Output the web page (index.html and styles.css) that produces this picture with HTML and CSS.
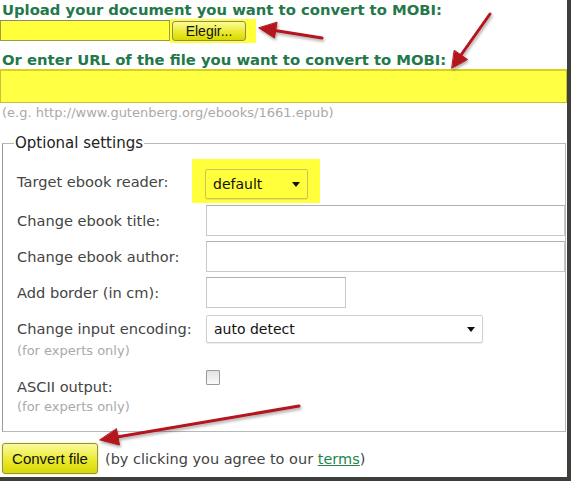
FILE: index.html
```html
<!DOCTYPE html>
<html lang="en">
<head>
    <meta charset="UTF-8">
    <title>Convert to MOBI</title>
    <link rel="stylesheet" href="styles.css">
</head>
<body>
    <div class="frame">
        <h2 class="title">Upload your document you want to convert to MOBI:</h2>
        <div class="file-row">
            <input type="text" class="file-text">
            <div class="hl-btn"><button class="btn btn-small">Elegir...</button></div>
        </div>

        <h2 class="title title-2">Or enter URL of the file you want to convert to MOBI:</h2>
        <input type="text" class="url">
        <p class="hint">(e.g. http://www.gutenberg.org/ebooks/1661.epub)</p>

        <fieldset class="options">
            <legend>Optional settings</legend>

            <div class="row row-target">
                <label>Target ebook reader:</label>
                <div class="hl-select">
                    <div class="select select-small">default <span class="caret"></span></div>
                </div>
            </div>

            <div class="row row-title">
                <label>Change ebook title:</label>
                <input type="text" class="field field-wide">
            </div>

            <div class="row">
                <label>Change ebook author:</label>
                <input type="text" class="field field-wide">
            </div>

            <div class="row">
                <label>Add border (in cm):</label>
                <input type="text" class="field field-short">
            </div>

            <div class="row row-top row-enc">
                <div>
                    <label class="enc-label">Change input encoding:</label>
                    <div class="note">(for experts only)</div>
                </div>
                <div class="select select-wide">auto detect <span class="caret"></span></div>
            </div>

            <div class="row row-top">
                <div class="ascii-label">
                    <label>ASCII output:</label>
                    <div class="note note-ascii">(for experts only)</div>
                </div>
                <input type="checkbox" class="check">
            </div>
        </fieldset>

        <div class="submit-row">
            <button class="btn btn-big">Convert file</button>
            <span class="agree">(by clicking you agree to our <a href="#">terms</a>)</span>
        </div>

        <!-- red annotation arrows -->
        <svg class="arrows" width="567" height="477" viewBox="0 0 567 477">
            <defs>
                <filter id="shadow" x="-20%" y="-20%" width="140%" height="140%">
                    <feDropShadow dx="1" dy="2" stdDeviation="1.5" flood-color="#000" flood-opacity="0.35"/>
                </filter>
            </defs>
            <g filter="url(#shadow)" fill="#b3141b" stroke="#b3141b" stroke-linecap="round">
                <line x1="275" y1="30.5" x2="322" y2="38" stroke-width="3"/>
                <polygon points="259,28 274.5,38 277,22.5" stroke-width="1"/>

                <line x1="461" y1="55" x2="490" y2="14" stroke-width="3"/>
                <polygon points="452,68 467.5,59.5 454.5,50.5" stroke-width="1"/>

                <line x1="117" y1="437" x2="299" y2="406" stroke-width="3"/>
                <polygon points="100,440 119.5,445 116.5,429" stroke-width="1"/>
            </g>
        </svg>
    </div>
</body>
</html>
```

FILE: styles.css
```css
body {
    margin: 0;
    background: #fff;
    font-family: "DejaVu Sans", Verdana, sans-serif;
    font-size: 15px;
    color: #333;
}
.frame {
    position: relative;
    width: 567px;
    height: 477px;
    border-right: 4px solid #3e3e3a;
    border-bottom: 4px solid #3e3e3a;
    overflow: hidden;
}
.title {
    margin: 0;
    padding-left: 2px;
    font-size: 14.8px;
    line-height: 19px;
    font-weight: bold;
    color: #23784a;
    white-space: nowrap;
}
.title-2 {
    margin-top: 8px;
}
.file-row {
    display: flex;
    align-items: center;
    height: 23px;
}
.file-text {
    box-sizing: border-box;
    width: 170px;
    height: 21px;
    margin: 0;
    border: 1px solid #a09c40;
    border-top-color: #8a8a70;
    background: #ffff3c;
}
.hl-btn {
    background: #ffff3c;
    padding: 2px 10px 2px 2px;
}
.btn {
    font-family: "Liberation Sans", Arial, sans-serif;
    color: #111;
    border: 1px solid #8f8c5a;
    border-radius: 3px;
    background: linear-gradient(#fbfb9c, #eaea30 55%, #d8d800);
    padding: 0;
    cursor: pointer;
}
.btn-small {
    width: 74px;
    height: 20px;
    font-size: 14px;
}
.url {
    display: block;
    box-sizing: border-box;
    width: 567px;
    height: 34px;
    margin: 0;
    border: 1px solid #c9c236;
    border-top: 2px solid #d8d020;
    background: #ffff44;
}
.hint {
    margin: 2px 0 0 2px;
    font-size: 13px;
    line-height: 16px;
    color: #aaa;
}
.options {
    margin: 14px 1px 0 2px;
    padding: 7px 0 17px 14px;
    border: 1px solid #b8b8b8;
    border-left-color: #999;
}
.options legend {
    padding: 0 1px;
    margin-left: -3px;
    font-size: 15px;
    line-height: 17px;
    color: #222;
}
.row {
    display: grid;
    grid-template-columns: 189px auto;
    justify-content: start;
    align-items: center;
    margin-top: 5px;
    color: #444;
}
.row label {
    font-size: 14.6px;
}
.row-target {
    margin-top: 0;
}
.row-title {
    margin-top: 2px;
}
.row-top {
    align-items: start;
}
.row-enc {
    margin-top: 7px;
}
.hl-select {
    margin-left: -14px;
    padding: 10px 12px 4px 13px;
    background: #ffff3c;
}
.select {
    box-sizing: border-box;
    position: relative;
    display: flex;
    align-items: center;
    padding-left: 7px;
    border: 1px solid #d0d0d0;
    border-radius: 2px;
    box-shadow: 0 1px 1px rgba(0, 0, 0, 0.08);
    color: #111;
    font-size: 14px;
}
.select-small {
    width: 103px;
    height: 30px;
    border-color: #c8c85a;
}
.select-wide {
    width: 277px;
    height: 28px;
    background: #fff;
}
.caret {
    position: absolute;
    right: 7px;
    top: 50%;
    margin-top: -2px;
    border-left: 4px solid transparent;
    border-right: 4px solid transparent;
    border-top: 5px solid #111;
}
.field {
    box-sizing: border-box;
    height: 31px;
    margin: 0;
    border: 1px solid #c8c8c8;
    border-top-color: #b0b0b0;
    background: #fff;
}
.field-wide {
    width: 359px;
}
.field-short {
    width: 140px;
}
.enc-label {
    display: block;
    line-height: 28px;
}
.note {
    font-size: 13px;
    line-height: 15px;
    color: #aaa;
}
.ascii-label {
    padding-top: 15px;
}
.ascii-label label {
    display: block;
    line-height: 18px;
}
.note-ascii {
    margin-top: 3px;
}
.check {
    appearance: none;
    width: 14px;
    height: 15px;
    margin: 7px 0 0;
    border: 1px solid #9a9a9a;
    border-radius: 1px;
    background: linear-gradient(#e2e2e2, #fafafa);
}
.submit-row {
    display: flex;
    align-items: center;
    gap: 7px;
    margin: 11px 0 0 2px;
}
.btn-big {
    width: 96px;
    height: 31px;
    font-size: 15px;
    border-color: #8c8c70;
    box-shadow: 0 0 0 1px #ffff9c;
}
.agree {
    font-size: 14.5px;
    color: #444;
}
.agree a {
    color: #23884a;
}
.arrows {
    position: absolute;
    top: 0;
    left: 0;
    pointer-events: none;
}
```
